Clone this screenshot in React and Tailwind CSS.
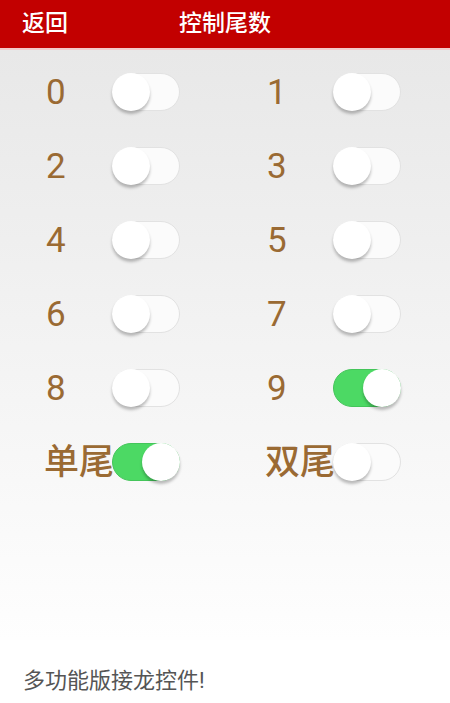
import React, { useState } from "react";

function Toggle({ on, onClick }) {
  return (
    <button
      type="button"
      onClick={onClick}
      className={`relative z-10 h-[38px] w-[68px] shrink-0 rounded-full border ${
        on ? "bg-[#4cd964] border-[#44c55a]" : "bg-[#fbfbfb] border-[#e2e2e2]"
      }`}
    >
      <span
        className={`absolute top-[-1px] h-[38px] w-[38px] rounded-full bg-white shadow-[0_3px_3px_rgba(0,0,0,0.25)] ${
          on ? "right-[-1px]" : "left-[-1px]"
        }`}
      />
    </button>
  );
}

function Cell({ label, on, onClick, bold }) {
  return (
    <div className="flex h-[74px] items-center">
      <span
        className={`w-[66px] shrink-0 whitespace-nowrap leading-none text-[#9a6a33] ${
          bold ? "relative -left-[2px] text-[35px] font-medium" : "text-[35px]"
        }`}
      >
        {label}
      </span>
      <Toggle on={on} onClick={onClick} />
    </div>
  );
}

export default function App() {
  const [state, setState] = useState({ 9: true, single: true });
  const flip = (k) => setState((s) => ({ ...s, [k]: !s[k] }));
  const keys = ["0", "1", "2", "3", "4", "5", "6", "7", "8", "9"];

  return (
    <div
      className="flex h-[703px] w-[450px] flex-col bg-white"
      style={{ fontFamily: 'Roboto, "Noto Sans CJK SC", sans-serif' }}
    >
      <div className="relative flex h-12 shrink-0 items-center bg-[#c20000] text-[23px] font-medium text-white">
        <span className="pl-[22px]">返回</span>
        <span className="absolute left-1/2 -translate-x-1/2">控制尾数</span>
      </div>
      <div className="h-[2px] shrink-0 bg-[#f2caca]" />
      <div className="h-[590px] shrink-0 bg-gradient-to-b from-[#e8e8e8] to-[#fefefe] pt-[5px] pl-[46px]">
        <div className="grid grid-cols-[221px_1fr]">
          {keys.map((k) => (
            <Cell key={k} label={k} on={!!state[k]} onClick={() => flip(k)} />
          ))}
          <Cell label="单尾" bold on={!!state.single} onClick={() => flip("single")} />
          <Cell label="双尾" bold on={!!state.double} onClick={() => flip("double")} />
        </div>
      </div>
      <div className="flex flex-1 items-center pl-[23px] pt-[18px] text-[22px] text-[#555555]">
        多功能版接龙控件!
      </div>
    </div>
  );
}
